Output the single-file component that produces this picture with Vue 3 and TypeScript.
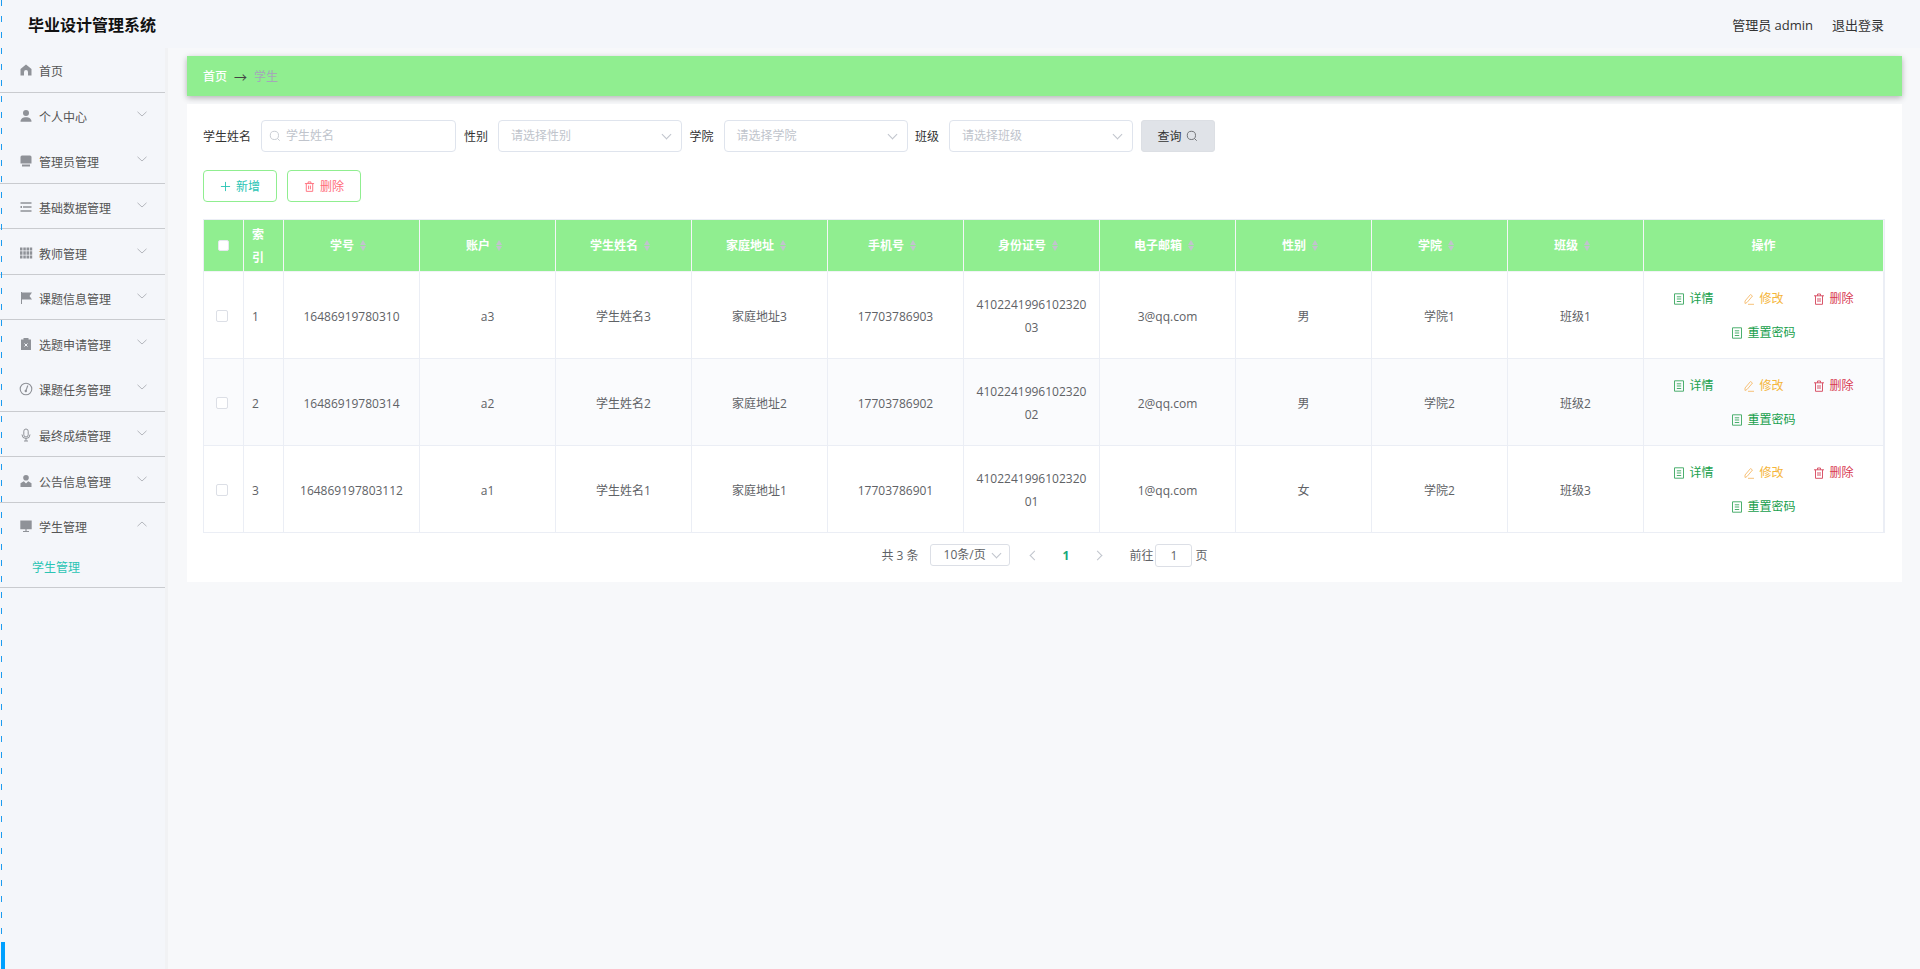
<template>
  <div class="page">
    <header class="top">
      <div class="brand">毕业设计管理系统</div>
      <div class="top-right">
        <span>管理员 admin</span>
        <span>退出登录</span>
      </div>
    </header>

    <div class="body">
      <aside class="side">
        <div
          v-for="item in menu"
          :key="item.label"
          class="menu-item"
          :class="{ line: item.line }"
        >
          <div class="menu-row">
            <svg class="menu-icon" viewBox="0 0 14 14" v-html="icons[item.icon]" />
            <span class="menu-label">{{ item.label }}</span>
            <svg v-if="item.arrow" class="menu-arrow" :class="{ up: item.open }" viewBox="0 0 10 6">
              <path d="M.5.8 5 5 9.500.8" fill="none" stroke="#b4b7bd" stroke-width="1" />
            </svg>
          </div>
          <div v-if="item.open" class="menu-sub">学生管理</div>
        </div>
      </aside>

      <main class="main">
        <div class="crumb">
          <span class="crumb-home">首页</span>
          <span class="crumb-sep">→</span>
          <span class="crumb-now">学生</span>
        </div>

        <section class="card">
          <div class="filters">
            <label class="f-label">学生姓名</label>
            <div class="field name">
              <svg class="search" viewBox="0 0 14 14">
                <circle cx="6.300" cy="6.300" r="4.800" fill="none" stroke="#c0c4cc" stroke-width="1" />
                <path d="m10 10 2.500 2.500" stroke="#c0c4cc" stroke-width="1" />
              </svg>
              <span class="ph">学生姓名</span>
            </div>
            <label class="f-label">性别</label>
            <div class="field sel"><span class="ph">请选择性别</span><i class="chev" /></div>
            <label class="f-label">学院</label>
            <div class="field sel"><span class="ph">请选择学院</span><i class="chev" /></div>
            <label class="f-label">班级</label>
            <div class="field sel"><span class="ph">请选择班级</span><i class="chev" /></div>
            <button type="button" class="query">
              查询
              <svg viewBox="0 0 14 14">
                <circle cx="6.300" cy="6.300" r="4.800" fill="none" stroke="#606266" stroke-width="1" />
                <path d="m10 10 2.500 2.500" stroke="#606266" stroke-width="1" />
              </svg>
            </button>
          </div>

          <div class="tools">
            <button type="button" class="tool add">
              <svg viewBox="0 0 12 12"><path d="M6 1v10M1 6h10" stroke="#2ac4b4" stroke-width="1" fill="none" /></svg>
              新增
            </button>
            <button type="button" class="tool del">
              <svg viewBox="0 0 12 12" v-html="trash('#ff6b7a')" />
              删除
            </button>
          </div>

          <div class="table-wrap">
            <table>
              <colgroup>
                <col class="c-narrow" />
                <col class="c-narrow" />
                <col v-for="col in columns" :key="col" class="c-data" />
                <col class="c-op" />
              </colgroup>
              <thead>
                <tr>
                  <th><i class="check head" /></th>
                  <th class="left">索引</th>
                  <th v-for="col in columns" :key="col">
                    {{ col }}<span class="sort"><i class="asc" /><i class="desc" /></span>
                  </th>
                  <th>操作</th>
                </tr>
              </thead>
              <tbody>
                <tr v-for="(row, i) in rows" :key="row.no">
                  <td><i class="check" /></td>
                  <td class="left">{{ i + 1 }}</td>
                  <td>{{ row.no }}</td>
                  <td>{{ row.account }}</td>
                  <td>{{ row.name }}</td>
                  <td>{{ row.address }}</td>
                  <td>{{ row.phone }}</td>
                  <td><span class="idcard">{{ row.idCard }}</span></td>
                  <td>{{ row.email }}</td>
                  <td>{{ row.gender }}</td>
                  <td>{{ row.college }}</td>
                  <td>{{ row.cls }}</td>
                  <td class="ops">
                    <button type="button" class="op green"><svg viewBox="0 0 12 12" v-html="doc('#4caf6e')" />详情</button>
                    <button type="button" class="op orange"><svg viewBox="0 0 12 12" v-html="pen" />修改</button>
                    <button type="button" class="op red"><svg viewBox="0 0 12 12" v-html="trash('#d9566a')" />删除</button>
                    <button type="button" class="op green"><svg viewBox="0 0 12 12" v-html="doc('#4caf6e')" />重置密码</button>
                  </td>
                </tr>
              </tbody>
            </table>
          </div>

          <div class="pager">
            <span class="total">共 3 条</span>
            <div class="size">10条/页<i class="chev" /></div>
            <span class="pg-arrow prev" />
            <span class="pg-num">1</span>
            <span class="pg-arrow next" />
            <span class="goto">前往</span>
            <div class="jump">1</div>
            <span class="goto-end">页</span>
          </div>
        </section>
      </main>
    </div>

    <div class="rail" />
    <div class="rail-thumb" />
  </div>
</template>

<script setup lang="ts">
type IconName =
  | 'home' | 'user' | 'admin' | 'lines' | 'grid' | 'flag'
  | 'clip' | 'gauge' | 'mic' | 'person' | 'screen'

interface MenuItem {
  label: string
  icon: IconName
  arrow: boolean
  line: boolean
  open?: boolean
}

const fill = '#8f9298'

const icons: Record<IconName, string> = {
  home: `<path fill="${fill}" d="M7 1.500 12.500 6v6.500H9V9a2 2 0 0 0-4 0v3.500H1.500V6z"/>`,
  user: `<circle fill="${fill}" cx="7" cy="4" r="3"/><path fill="${fill}" d="M1.500 12.800C1.500 9.500 4 8.300 7 8.300s5.500 1.200 5.500 4.500z"/>`,
  admin: `<path fill="${fill}" d="M3 1.500h8A1.500 1.500 0 0 1 12.500 3v6.500h-11V3A1.500 1.500 0 0 1 3 1.500zM3 10.500h8v2H3z"/>`,
  lines: `<path stroke="${fill}" stroke-width="1.300" d="M1.500 3h11M4 7h8.500M1.500 11h11"/><path fill="${fill}" d="M1.500 6h1.500v2H1.500z"/>`,
  grid: `<path fill="${fill}" d="M1 1.500h2.500v3H1zM4.300 1.500h2.500v3H4.300zM7.500 1.500H10v3H7.500zM10.700 1.500h2.500v3h-2.500zM1 5.300h2.500v3.400H1zM4.300 5.300h2.500v3.400H4.300zM7.500 5.300H10v3.400H7.500zM10.700 5.300h2.500v3.400h-2.500zM1 9.500h2.500v3H1zM4.300 9.500h2.500v3H4.300zM7.500 9.500H10v3H7.500zM10.700 9.500h2.500v3h-2.500z"/>`,
  flag: `<path fill="${fill}" d="M2 1h1v12H2zM3 1.500h10L10.500 5 13 8.500H3z"/>`,
  clip: `<path fill="${fill}" d="M2 2.500h2.500V1h5v1.500H12V13H2z"/><path stroke="#f4f6fa" stroke-width="1" d="m5.500 6.500 3 3m0-3-3 3"/>`,
  gauge: `<circle cx="7" cy="7" r="5.800" fill="none" stroke="${fill}" stroke-width="1.100"/><path stroke="${fill}" stroke-width="1.100" d="m8.800 3.500-1.800 5"/><circle fill="${fill}" cx="6.800" cy="9" r="1.200"/>`,
  mic: `<rect x="4.800" y="1" width="4.400" height="8" rx="2.200" fill="none" stroke="${fill}"/><path fill="none" stroke="${fill}" d="M3 6.500a4 4 0 0 0 8 0M7 10.500V13M5 13h4"/>`,
  person: `<circle fill="${fill}" cx="7" cy="3.800" r="2.800"/><path fill="${fill}" d="M4.800 7.300 7 9.500l2.200-2.200 3.300 2v3.700h-11V9.300z"/>`,
  screen: `<path fill="${fill}" d="M1.300 1.500h11.400v8.700H1.300zM6.400 10.200h1.200v2H6.400zM4 12h6v1H4z"/>`,
}

const menu: MenuItem[] = [
  { label: '首页', icon: 'home', arrow: false, line: true },
  { label: '个人中心', icon: 'user', arrow: true, line: false },
  { label: '管理员管理', icon: 'admin', arrow: true, line: true },
  { label: '基础数据管理', icon: 'lines', arrow: true, line: true },
  { label: '教师管理', icon: 'grid', arrow: true, line: true },
  { label: '课题信息管理', icon: 'flag', arrow: true, line: true },
  { label: '选题申请管理', icon: 'clip', arrow: true, line: false },
  { label: '课题任务管理', icon: 'gauge', arrow: true, line: true },
  { label: '最终成绩管理', icon: 'mic', arrow: true, line: true },
  { label: '公告信息管理', icon: 'person', arrow: true, line: true },
  { label: '学生管理', icon: 'screen', arrow: true, line: true, open: true },
]

const columns = ['学号', '账户', '学生姓名', '家庭地址', '手机号', '身份证号', '电子邮箱', '性别', '学院', '班级']

const rows = [
  { no: '16486919780310', account: 'a3', name: '学生姓名3', address: '家庭地址3', phone: '17703786903', idCard: '410224199610232003', email: '3@qq.com', gender: '男', college: '学院1', cls: '班级1' },
  { no: '16486919780314', account: 'a2', name: '学生姓名2', address: '家庭地址2', phone: '17703786902', idCard: '410224199610232002', email: '2@qq.com', gender: '男', college: '学院2', cls: '班级2' },
  { no: '164869197803112', account: 'a1', name: '学生姓名1', address: '家庭地址1', phone: '17703786901', idCard: '410224199610232001', email: '1@qq.com', gender: '女', college: '学院2', cls: '班级3' },
]

const trash = (c: string) =>
  `<path fill="none" stroke="${c}" d="M1 2.800h10M2.500 2.800v8.500h7V2.800M4.500 2.800V1h3v1.800M5 5v4M7 5v4"/>`

const doc = (c: string) =>
  `<path fill="none" stroke="${c}" d="M1.500.8h9v10.400h-9zM3.800 3.800h4.400M3.800 6h4.400M3.800 8.500h4.400"/>`

const pen = `<path fill="none" stroke="#f7c27a" d="M2 8 7.500 1.500 9.500 3 4 9.500 2 10.500zM5 11.300h6"/>`
</script>

<style scoped>
.page {
  position: relative;
  display: flex;
  flex-direction: column;
  height: 969px;
  overflow: hidden;
  background: #f7f8fa;
  color: #606266;
  font-family: "Open Sans", "Noto Sans CJK SC", sans-serif;
  font-size: 12px;
}

.top {
  display: flex;
  flex: none;
  align-items: center;
  justify-content: space-between;
  height: 48px;
  padding: 0 36px 0 28px;
  background: #f4f6fa;
}

.brand {
  font-size: 16px;
  font-weight: 700;
  color: #111;
}

.top-right {
  display: flex;
  gap: 19px;
  font-size: 13px;
  color: #333;
}

.body {
  display: flex;
  flex: 1;
  min-height: 0;
}

.side {
  flex: none;
  box-sizing: border-box;
  width: 168px;
  background: #f4f6fa;
  border-right: 3px solid #f1f2f4;
}

.menu-item.line {
  border-bottom: 1px solid #c9cbcf;
}

.menu-row {
  display: flex;
  align-items: center;
  box-sizing: border-box;
  height: 44.600px;
  padding: 4px 0 0 19px;
  color: #555;
}

.menu-item:not(.line) .menu-row {
  height: 45.600px;
}

.menu-item:first-child .menu-row {
  height: 43.500px;
  padding-top: 2px;
}

.menu-icon {
  flex: none;
  width: 14px;
  height: 14px;
  margin-top: -2px;
  margin-right: 6px;
}

.menu-label {
  flex: 1;
}

.menu-arrow {
  flex: none;
  width: 10px;
  height: 6px;
  margin: -6px 18px 0 0;
}

.menu-arrow.up {
  transform: rotate(180deg);
}

.menu-sub {
  height: 40px;
  padding-left: 32px;
  line-height: 42px;
  color: #2ac4b4;
}

.main {
  flex: 1;
  min-width: 0;
  padding: 8px 18px 0 19px;
}

.crumb {
  display: flex;
  align-items: center;
  gap: 7px;
  height: 40px;
  padding-left: 16px;
  background: #90ee90;
  box-shadow: 0 2px 6px rgba(0, 0, 0, 0.28);
}

.crumb-home {
  font-weight: 500;
  color: #fff;
}

.crumb-sep {
  font-size: 13px;
  color: #444;
}

.crumb-now {
  color: #a4a8b8;
}

.card {
  margin-top: 8px;
  padding: 16px 16px 0;
  background: #fff;
}

.filters {
  display: flex;
  align-items: center;
  height: 32px;
}

.f-label {
  margin-right: 10px;
  color: #333;
}

.field {
  position: relative;
  box-sizing: border-box;
  height: 32px;
  margin-right: 8px;
  border: 1px solid #dfe4ed;
  border-radius: 4px;
  line-height: 30px;
}

.field.name {
  width: 195px;
  padding-left: 24px;
}

.field.sel {
  width: 184px;
  margin-right: 7.500px;
  padding-left: 12px;
}

.search {
  position: absolute;
  top: 9px;
  left: 7px;
  width: 12px;
  height: 12px;
}

.ph {
  color: #c0c4cc;
}

.chev {
  position: absolute;
  top: 10px;
  right: 11px;
  width: 6px;
  height: 6px;
  border-right: 1px solid #c0c4cc;
  border-bottom: 1px solid #c0c4cc;
  transform: rotate(45deg);
}

.query {
  display: flex;
  align-items: center;
  justify-content: center;
  gap: 4px;
  box-sizing: border-box;
  width: 74px;
  height: 32px;
  padding: 0;
  border: 1px solid #dcdfe4;
  border-radius: 3px;
  background: #e0e3e8;
  color: #333;
  font: inherit;
}

.query svg {
  width: 12px;
  height: 12px;
}

.tools {
  display: flex;
  gap: 10px;
  margin-top: 18px;
}

.tool {
  display: flex;
  align-items: center;
  justify-content: center;
  gap: 5px;
  box-sizing: border-box;
  width: 74px;
  height: 32px;
  padding: 0;
  border: 1px solid #90ee90;
  border-radius: 4px;
  background: #fff;
  font: inherit;
}

.tool svg {
  width: 11px;
  height: 11px;
}

.tool.add {
  color: #2ac4b4;
}

.tool.del {
  color: #ff6b7a;
}

.table-wrap {
  box-sizing: border-box;
  width: 1682px;
  margin-top: 17px;
  border-top: 1px solid #ebeef5;
  border-left: 1px solid #ebeef5;
  border-right: 1px solid #ebeef5;
}

table {
  width: 1680px;
  border-collapse: separate;
  border-spacing: 0;
  table-layout: fixed;
}

.c-narrow {
  width: 40px;
}

.c-data {
  width: 136px;
}

.c-op {
  width: 240px;
}

th {
  box-sizing: border-box;
  height: 52px;
  padding: 0 8px;
  border-right: 1px solid #f4f6f8;
  border-bottom: 1px solid #f1f3f6;
  background: #90ee90;
  color: #fff;
  font-weight: 700;
  line-height: 23px;
  text-align: center;
}

td {
  box-sizing: border-box;
  height: 87px;
  padding: 2px 8px 0;
  border-right: 1px solid #ebeef5;
  border-bottom: 1px solid #ebeef5;
  line-height: 23px;
  text-align: center;
  word-break: break-all;
}

tbody tr:nth-child(even) td {
  background: #fafbfd;
}

.left {
  text-align: left;
}

.idcard {
  display: inline-block;
  width: 112px;
}

.check {
  display: block;
  box-sizing: border-box;
  width: 12px;
  height: 12px;
  margin: 0 auto 0 4px;
  border: 1px solid #dcdfe6;
  border-radius: 2px;
  background: #fff;
}

.check.head {
  width: 11px;
  height: 11px;
  margin-left: 6px;
  border-color: #e6e8ee;
}

.sort {
  display: inline-flex;
  flex-direction: column;
  gap: 1px;
  margin: 0 7px 0 6px;
  vertical-align: 5px;
}

.sort i {
  width: 0;
  height: 0;
  border-right: 3.500px solid transparent;
  border-left: 3.500px solid transparent;
}

.sort .asc {
  border-bottom: 5px solid #c0c4cc;
}

.sort .desc {
  border-top: 5px solid #c0c4cc;
}

.ops {
  padding: 2px 14px 0;
  line-height: 0;
}

.op {
  display: inline-flex;
  align-items: center;
  justify-content: center;
  gap: 4px;
  box-sizing: border-box;
  height: 34px;
  padding: 0;
  border: 0;
  background: none;
  font: inherit;
  line-height: 1;
}

.op:not(:last-child) {
  width: 70px;
}

.op:last-child {
  width: 100%;
}

.op svg {
  width: 12px;
  height: 12px;
}

.green {
  color: #17a04c;
}

.orange {
  color: #f5b53a;
}

.red {
  color: #d8394f;
}

.pager {
  display: flex;
  align-items: center;
  justify-content: center;
  height: 49px;
  padding-bottom: 5px;
  box-sizing: border-box;
  color: #606266;
}

.total {
  margin-right: 11px;
}

.size {
  position: relative;
  box-sizing: border-box;
  width: 80px;
  height: 22px;
  margin-right: 21px;
  padding-left: 13px;
  border: 1px solid #dcdfe6;
  border-radius: 3px;
  line-height: 20px;
}

.size .chev {
  top: 5px;
  right: 9px;
}

.pg-arrow {
  width: 6px;
  height: 6px;
  border-top: 1.500px solid #c0c4cc;
  border-left: 1.500px solid #c0c4cc;
}

.prev {
  margin-right: 25px;
  transform: rotate(-45deg);
}

.next {
  margin-right: 28px;
  transform: rotate(135deg);
}

.pg-num {
  margin-right: 25px;
  font-weight: 700;
  color: #17a87a;
}

.jump {
  box-sizing: border-box;
  width: 37px;
  height: 23px;
  margin: 0 3px 0 2px;
  border: 1px solid #dcdfe6;
  border-radius: 3px;
  line-height: 21px;
  text-align: center;
}

.rail {
  position: absolute;
  top: 0;
  bottom: 27px;
  left: 1px;
  width: 1px;
  background: repeating-linear-gradient(#1b9cf0 0 6px, transparent 6px 16px);
}

.rail-thumb {
  position: absolute;
  bottom: 0;
  left: 1px;
  width: 4px;
  height: 27px;
  background: #00a0ff;
}
</style>

<style>
html,
body {
  margin: 0;
  background: #f7f8fa;
}
</style>
